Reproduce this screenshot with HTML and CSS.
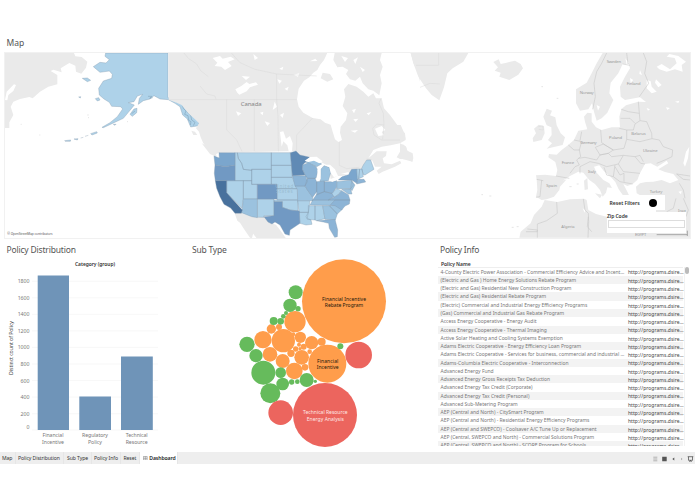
FILE: index.html
```html
<!DOCTYPE html>
<html lang="en">
<head>
<meta charset="utf-8">
<title>Dashboard</title>
<link rel="stylesheet" href="styles.css">
</head>
<body>
<main class="dashboard">
<section class="map-panel">
<h2>Map</h2>
<div class="map">
<svg class="map-art" viewBox="5 53 685 185">
<!-- Siberia, Alaska -->
<g transform="translate(0 35) scale(.33333)">
<path class="land" d="M15 54H222L226 64 245 66 262 80 258 98 244 116 228 110 226 92 208 84 182 100 185 112 160 104 152 108 172 120 172 148 145 155 120 170 98 190 88 186 60 192 40 200 32 215 40 240 28 262 28 279H15Z"/>
<path class="water" d="M15 195 20 170 42 148 48 150 40 168 25 180 22 196Z"/>
<path class="state s1" d="M317 54H504V188L518 190 530 202 546 198 560 205 572 225 585 247 597 255 597 272 572 276 562 252 548 240 540 215 525 205 505 194 480 192 462 182 450 192 430 197 415 208 418 190 428 178 412 183 402 200 385 203 403 210 385 232 370 250 340 264 310 278 306 277 330 263 352 245 368 222 362 215 335 214 328 202 312 192 298 180 296 160 310 138 335 130 337 118 328 108 300 112 280 95 300 82 318 84 328 74 315 64ZM390 238 402 222 411 220 410 233 397 244ZM247 130 262 129 272 136 262 140ZM286 191 296 188 300 195 292 198ZM272 296 290 290 292 294 276 300ZM194 317 212 315 211 319 196 319ZM222 312 234 311 232 315ZM236 186 242 185 241 189ZM340 268 348 268 345 271ZM255 304 265 301M242 309 250 307"/>
<path class="coast" d="M546 205 550 220 558 228 554 238 564 242 566 256 573 260 571 270M556 212 562 232 572 240 575 255 585 262 580 272M444 184 455 184 449 190 458 188M395 236 405 228"/>
<path class="speck" d="M118 300h3M262 240h4M264 248h3M381 260h3M62 268h3"/>
</g>
<!-- North America -->
<g transform="translate(200 50) scale(.33333)">
<path class="land" d="M-94 9H382L372 30 360 45 352 60 340 68 328 82 312 92 296 116 291 148 296 170 310 188 338 204 362 208 375 218 392 224 398 245 405 268 415 276 426 270 420 248 422 230 438 210 442 190 428 168 436 140 432 118 445 102 470 110 490 125 505 140 520 130 528 145 545 145 552 175 570 195 592 225 602 225 613 250 617 270 600 280 572 286 545 290 520 300 505 325 530 304 560 304 558 318 548 325 552 340 575 343 600 332 604 340 585 350 548 365 536 372 530 362 545 350 525 350 516 330 500 330 485 357 430 376 400 388 392 388 388 350 370 340 330 321 300 315 288 303 57 308 40 316 30 303 10 280 2 262 -3 245 -12 235 -3 220 -15 208 -35 190 -55 165 -70 158 -94 149ZM400 9H545L540 30 548 50 540 75 545 100 538 136 520 122 505 118 488 100 480 80 466 92 450 88 438 72 445 60 428 50 410 52 398 30ZM608 282 618 290 622 302 638 310 640 325 636 335 625 328 600 327 590 322 600 305ZM650 9H660V95L655 70 640 40 632 9ZM368 68 390 72 400 88 382 95 362 85ZM-26 242-15 245-8 255-20 255ZM5 280 25 290 50 315 48 320 30 312ZM104 490 124 490 155 500 172 503 192 500 215 520 228 524 240 540 258 565H170L155 545 140 520 128 503 130 500 146 526 160 548 156 564 150 563 134 540 120 518 112 512Z"/>
<path class="water" d="M38 24 60 18 68 26 92 20 104 28 84 36 95 48 75 60 64 50 44 48 52 38ZM106 118 124 108 140 96 148 102 168 97 174 104 150 112 140 124 118 134 112 128ZM125 78 150 80 138 90ZM232 88 246 92 238 101ZM254 116 266 110 262 122ZM160 12 174 24 164 30ZM238 56 250 50 247 60ZM280 74 298 70 294 80ZM218 180 224 155 231 170ZM240 195 252 188 248 204ZM240 246 250 244 258 266 270 258 278 280 276 304 266 304 262 286 250 274 245 290ZM180 188 190 185 188 196ZM108 184 124 190 114 198ZM194 214 210 219 202 228ZM330 34 346 26 352 33ZM460 208 475 206 467 216ZM452 242 474 240 465 248ZM525 236 545 228 556 240 545 246 552 256 535 258ZM424 18 444 24 435 36ZM460 30 474 22 466 42ZM480 50 495 60 488 66ZM456 180 468 176 462 190ZM500 190 514 186 506 196ZM382 9 404 9 400 30 412 52 400 70 380 66 368 52Z"/>
<path class="border" d="M-94 149H290M-48 9-35 25-10 42 2 62 25 80M0 108 20 132 45 138 48 148M94 9 120 38 165 58 230 72V148L234 200 235 304M230 72 350 78M80 148V240L110 270 126 304M163 148V304M338 204 290 255V304M418 276V346L440 356 478 352M543 145 537 160 550 190 552 225 530 222 518 235 522 255 545 270H610M552 225 548 268M500 327 516 330"/>
<path class="state s1" d="M105 308H112L115 325 125 340 130 358 155 360V392H105ZM112 308H214V358H155V362L130 358 125 340 115 325ZM155 358H214V403H155ZM214 308H271L275 346H214ZM214 346H275L277 382H214ZM214 382H277L285 400 292 416H231V403H214ZM231 416H292L293 450H231ZM222 450H293L294 483 270 480 247 472V455H222ZM80 392H130V447L126 475 80 428ZM130 392H155V403H172V447H130ZM172 447H222V497H192V502H172ZM293 452H330L325 487H297ZM297 487H325L322 505 333 510 336 523 318 525 300 520ZM325 467H345V510L322 508 318 500 325 487ZM345 467H368L375 506 350 512 345 510ZM393 430 400 425 410 416 425 422 415 434 402 442ZM485 355 490 345 500 330 512 330 522 358 495 375 490 374ZM470 357H479L476 386 470 390ZM479 357H486L490 380 476 386Z"/>
<path class="state s2" d="M130 447H172V503L155 500 124 488 127 475ZM368 467H388L412 492 406 510 375 508ZM330 465 338 450H410L390 466ZM410 395 455 390 460 405 452 416H410ZM362 375 362 358 372 347 388 352 392 368 385 392 360 395ZM315 336 328 332 345 330 365 342 350 350 325 340ZM388 467 405 465 427 478 412 492ZM285 408H315L338 442V452H293L292 418ZM455 392 465 405 456 422 452 416ZM425 418 452 417 456 432 445 432Z"/>
<path class="state s3" d="M277 377H318L322 395 315 408H285ZM308 345 325 338 348 350 354 362 348 385H322L315 375 307 358ZM322 385H345L350 395V425L338 442 322 420 315 408ZM350 395 373 393V425L350 435ZM373 395H395L410 392V412L397 430 373 425ZM338 450 350 433 373 425 395 430 402 440 385 450ZM385 450 402 442 415 434 425 422 445 434 450 450ZM405 450H450L448 462 435 468 425 480 405 467 390 466ZM350 512 405 508 413 540 412 560 404 562 388 535 386 520 370 516ZM472 388 492 388 497 396 470 402Z"/>
<path class="state s4" d="M42 318 58 324 57 308H105V346L75 350 45 345ZM415 390 425 380 445 374 455 358 470 357 472 390 470 400 455 390Z"/>
<path class="state s5" d="M45 345 75 350 105 346V392H46L43 370ZM172 403H231V447H172ZM222 455H247V472L270 480 298 483 300 520 270 540 268 556 255 552 240 525 225 516 216 522 204 516 192 500 222 497Z"/>
<path class="state s6" d="M271 308 288 303 300 315 330 322 308 345 307 358 315 375 277 377Z"/>
<path class="state s7" d="M46 392H80V428L127 480 124 490H105L92 474 72 463 60 440 50 415Z"/>
<path class="water" d="M314 332 330 321 350 320 368 334 358 340 342 332 325 336ZM354 392 352 360 360 347 370 344 362 358 362 388ZM372 344 390 344 405 358 414 378 402 382 392 368 388 352ZM390 388 414 378 428 378 414 388 396 396ZM422 372 446 366 446 373Z"/>
<text class="ghost" x="226" y="413">United</text><text class="ghost" x="228" y="428">States</text>
<text class="label big" x="122" y="169" textLength="63">Canada</text>
</g>
<!-- Europe and North Africa -->
<g transform="translate(400 50) scale(.33333)">
<path class="land" d="M32 9H205L190 35 158 55 142 70 132 112 118 151 95 135 78 115 55 80 42 45ZM280 36 296 28 302 42 320 38 345 32 362 42 369 55 355 74 328 90 298 80 302 68 284 62 294 52ZM0 235 15 250 17 268 0 276ZM0 280 18 290 22 302 38 318 38 335 18 330 0 325Z"/>
<path class="land" d="M608 9H870V445H795L780 440 750 445 725 438 710 430 708 410 720 400 738 396 760 395 785 390 810 400 835 390 820 372 795 366 775 358 805 340 800 332 772 350 752 340 735 342 720 370 712 390 698 402 682 408 670 402 682 425 690 442 672 440 656 418 646 396 632 380 612 364 598 346 582 350 590 368 610 390 628 400 636 414 622 412 618 428 608 440 600 420 585 402 568 390 550 368 535 365 510 378 488 392 500 388 480 410 478 420 462 440 440 448 425 450 408 440 412 420 410 388 408 376 435 374 468 378 472 360 466 336 445 322 447 312 470 314 485 300 505 285 522 270 535 242 562 238 555 215 552 200 562 188 575 190 575 215 588 232 605 240 635 232 660 232 658 200 664 178 678 166 715 155 738 156 720 142 675 150 662 140 660 110 675 80 690 55 686 42 668 42 655 70 632 98 628 130 640 150 622 188 605 205 590 212 582 185 576 160 565 178 540 182 528 160 528 118 560 98 575 70 590 40Z"/>
<path class="land" d="M430 200 440 176 456 182 450 196 466 202 470 226 482 250 495 262 488 285 465 290 440 296 456 280 444 270 455 255 454 232 440 226ZM402 236 416 224 432 228 434 250 425 270 400 276 398 265 408 250ZM552 392 562 384 564 418 554 420ZM585 430 606 434 600 445ZM434 450 472 456 510 448 552 446 560 450 565 480 588 492 620 500 660 495 700 490H870V563H358L362 545 392 520 402 495 425 470ZM768 440H870V500H768Z"/>
<path class="water" d="M770 50 785 42 810 58 830 40 824 24 800 20 808 12 835 18 858 35 845 45 848 65 825 58 800 65 778 58ZM740 90 752 94 755 110 770 125 755 130 740 115ZM768 88 785 105 775 112 765 98ZM690 84 700 90 692 98ZM720 60 726 75 718 72ZM676 25 686 38 680 44ZM740 174 750 178 744 182ZM798 172 810 174 802 180ZM825 155 838 152 835 159ZM835 425 845 423 843 433ZM850 340 858 305 868 290 864 325 855 350ZM590 165 600 170 594 182ZM548 475 556 480 554 488Z"/>
<path class="border dark" d="M620 9 605 40 590 65 582 100 586 140 578 178M668 42 690 46M680 9 684 42M730 9 740 35 734 70 746 100 718 140M664 178 685 185 718 190M715 155 718 190 720 212 705 222 700 240 680 240 658 235M662 205 690 205 705 220M720 212 740 215 755 250 756 266 720 275 680 268M680 240V268L672 295 640 300 615 285 605 278 602 240M756 266 778 270 790 290 818 300 816 320 795 330 770 340M522 270 545 275 538 300 542 320 530 330 538 345 525 350 510 370M545 245 540 272M505 285 522 300 538 300M586 292 610 282 640 300 625 310 600 315 586 292M535 325 555 322 590 330 600 315 625 310 635 320 670 316 655 342 620 350 595 340 570 335 540 350M670 316 705 320 722 340 735 342M655 342 670 365 720 370M705 320 720 316 730 335M612 352 620 375 640 380 645 345M645 350 660 375 672 370 672 395M640 380 660 395 698 402M425 390 420 440 408 442M410 388 430 392M468 378 508 385M540 350V370M470 456 472 490 440 512 412 522 412 545 378 545M550 447 555 480 565 490 566 515 564 563M382 537 412 540V563M870 378 830 372 850 388 870 390M838 400 850 420 855 445M828 445 820 475 800 485M850 445 865 480 858 500M565 500 562 530 575 545"/>
<path class="border" d="M116 9V45M48 46H116M60 112 90 100 120 102M415 230 428 228 430 240 416 238"/>
<path class="speck" d="M424 110h5M470 145h5M508 410h7M244 434h5M268 438h6M335 532h6M350 530h6M530 402h6"/>
<g class="label"><text x="620" y="38" textLength="43">Sweden</text><text x="680" y="105" textLength="42">Finland</text><text x="539" y="131" textLength="42">Norway</text><text x="694" y="255" textLength="43">Belarus</text><text x="627" y="268" textLength="39">Poland</text><text x="541" y="282" textLength="49">Germany</text><text x="729" y="307" textLength="44">Ukraine</text><text x="485" y="341" textLength="37">France</text><text x="564" y="370" textLength="24">Italy</text><text x="439" y="412" textLength="32">Spain</text><text x="749" y="429" textLength="38">Turkey</text><text x="484" y="534" textLength="40">Algeria</text><text x="834" y="486">Iraq</text><text x="705" y="558" textLength="34">EGYPT</text></g>
<path class="scale-mark" d="M770 554H862M862 542V558"/>
</g>
</svg>
<span class="credit">© OpenStreetMap contributors</span>
<div class="reset"><b>Reset Filters</b><i></i></div>
<div class="zip"><label for="zip">Zip Code</label><input id="zip" type="text"></div>
</div>
</section>
<div class="panels">
<section class="distribution">
<h2>Policy Distribution</h2>
<svg class="chart" viewBox="0 258 190 192">
<path class="grid" d="M32 281.2H158M32 297.8H158M32 314.3H158M32 330.9H158M32 347.4H158M32 364H158M32 380.6H158M32 397.1H158M32 413.7H158M32 430H158"/>
<path class="bars" d="M37.7 275.5H69V430H37.7ZM79.3 396.5H111V430H79.3ZM121 356.5H152.8V430H121Z"/>
<text class="chart-title" x="95" y="265.8" textLength="40">Category (group)</text>
<g class="ticks"><text x="29.5" y="283.1">1800</text><text x="29.5" y="299.7">1600</text><text x="29.5" y="316.2">1400</text><text x="29.5" y="332.8">1200</text><text x="29.5" y="349.4">1000</text><text x="29.5" y="365.9">800</text><text x="29.5" y="382.5">600</text><text x="29.5" y="399.1">400</text><text x="29.5" y="415.6">200</text><text x="29.5" y="428.7">0</text></g>
<g class="cats"><text x="53" y="437.3" textLength="21">Financial</text><text x="53" y="444.3" textLength="22">Incentive</text><text x="95" y="437.3" textLength="26">Regulatory</text><text x="95" y="444.3" textLength="14">Policy</text><text x="136.7" y="437.3" textLength="22">Technical</text><text x="136.7" y="444.3" textLength="22">Resource</text></g>
<text class="axis" transform="translate(13.3 375) rotate(-90)" textLength="54">Distinct count of Policy</text>
</svg>
</section>
<section class="subtype">
<h2>Sub Type</h2>
<svg class="bubbles" viewBox="190 258 248 192">
<g transform="translate(230 255.3) scale(.33333)">
<g class="orange"><circle cx="342" cy="138" r="126"/><circle cx="292" cy="325" r="57"/><circle cx="195" cy="199" r="32"/><circle cx="160" cy="256" r="35"/><circle cx="99" cy="253" r="26"/><circle cx="124" cy="221" r="14"/><circle cx="147" cy="215" r="9"/><circle cx="120" cy="297" r="22"/><circle cx="158" cy="317" r="21"/><circle cx="193" cy="347" r="25"/><circle cx="215" cy="306" r="22"/><circle cx="211" cy="246" r="17"/><circle cx="245" cy="262" r="20"/><circle cx="275" cy="259" r="12"/><circle cx="183" cy="294" r="11"/><circle cx="197" cy="281" r="8"/><circle cx="207" cy="268" r="6"/><circle cx="221" cy="274" r="9"/><circle cx="225" cy="336" r="10"/><circle cx="239" cy="289" r="7"/><circle cx="190" cy="237" r="6"/><circle cx="210" cy="280" r="5"/></g>
<g class="green"><circle cx="197" cy="111" r="21"/><circle cx="180" cy="150" r="20"/><circle cx="204" cy="160" r="8"/><circle cx="168" cy="173" r="6"/><circle cx="160" cy="183" r="7"/><circle cx="152" cy="198" r="10"/><circle cx="131" cy="197" r="12"/><circle cx="51" cy="267" r="23"/><circle cx="78" cy="301" r="20"/><circle cx="100" cy="352" r="36"/><circle cx="152" cy="352" r="16"/><circle cx="158" cy="386" r="19"/><circle cx="121" cy="414" r="30"/><circle cx="185" cy="380" r="8"/><circle cx="202" cy="379" r="7"/><circle cx="230" cy="374" r="21"/><circle cx="256" cy="378" r="5"/><circle cx="331" cy="273" r="9"/></g>
<g class="red"><circle cx="386" cy="299" r="40"/><circle cx="152" cy="472" r="37"/><circle cx="285" cy="479" r="96"/></g>
<g class="bubble-text"><text x="342" y="136" textLength="132">Financial Incentive</text><text x="342" y="156" textLength="115">Rebate Program</text><text x="293" y="322" textLength="64">Financial</text><text x="293" y="342" textLength="66">Incentive</text><g class="pale"><text x="286" y="475" textLength="134">Technical Resource</text><text x="286" y="496" textLength="112">Energy Analysis</text></g></g>
</g>
</svg>
</section>
<section class="info">
<h2>Policy Info</h2>
<h3>Policy Name</h3>
<div class="table-wrap">
<ul class="table">
<li><span>4-County Electric Power Association - Commercial Efficiency Advice and Incent...</span><a>http://programs.dsire...</a></li>
<li><span>(Electric and Gas ) Home Energy Solutions Rebate Program</span><a>http://programs.dsire...</a></li>
<li><span>(Electric and Gas) Residential New Construction Program</span><a>http://programs.dsire...</a></li>
<li><span>(Electric and Gas) Residential Rebate Program</span><a>http://programs.dsire...</a></li>
<li><span>(Electric) Commercial and Industrial Energy Efficiency Programs</span><a>http://programs.dsire...</a></li>
<li><span>(Gas) Commercial and Industrial Gas Rebate Program</span><a>http://programs.dsire...</a></li>
<li><span>Access Energy Cooperative - Energy Audit</span><a>http://programs.dsire...</a></li>
<li><span>Access Energy Cooperative - Thermal Imaging</span><a>http://programs.dsire...</a></li>
<li><span>Active Solar Heating and Cooling Systems Exemption</span><a>http://programs.dsire...</a></li>
<li><span>Adams Electric Cooperative - Energy Efficiency Loan Program</span><a>http://programs.dsire...</a></li>
<li><span>Adams Electric Cooperative - Services for business, commercial and industrial ...</span><a>http://programs.dsire...</a></li>
<li><span>Adams-Columbia Electric Cooperative - Interconnection</span><a>http://programs.dsire...</a></li>
<li><span>Advanced Energy Fund</span><a>http://programs.dsire...</a></li>
<li><span>Advanced Energy Gross Receipts Tax Deduction</span><a>http://programs.dsire...</a></li>
<li><span>Advanced Energy Tax Credit (Corporate)</span><a>http://programs.dsire...</a></li>
<li><span>Advanced Energy Tax Credit (Personal)</span><a>http://programs.dsire...</a></li>
<li><span>Advanced Sub-Metering Program</span><a>http://programs.dsire...</a></li>
<li><span>AEP (Central and North) - CitySmart Program</span><a>http://programs.dsire...</a></li>
<li><span>AEP (Central and North) - Residential Energy Efficiency Programs</span><a>http://programs.dsire...</a></li>
<li><span>AEP (Central and SWEPCO) - Coolsaver A/C Tune Up or Replacement</span><a>http://programs.dsire...</a></li>
<li><span>AEP (Central, SWEPCO and North) - Commercial Solutions Program</span><a>http://programs.dsire...</a></li>
<li><span>AEP (Central, SWEPCO and North) - SCORE Program for Schools</span><a>http://programs.dsire...</a></li>
</ul>
<div class="scroll"><i></i></div>
</div>
</section>
</div>
</main>
<nav class="tabs">
<span class="t1">Map</span><span class="t2">Policy Distribution</span><span class="t3">Sub Type</span><span class="t4">Policy Info</span><span class="t5">Reset</span>
<span class="active"><svg viewBox="0 0 5 5"><path d="M.4.4H4.6V4.6H.4ZM2.5.4V4.6M.4 2.5H4.6"/></svg>Dashboard</span>
<svg class="tools" viewBox="0 0 48 12"><path class="list" d="M6.3 5.2H10.3M6.3 7H10.3M6.3 8.8H10.3"/><path class="fill" d="M15.2 4.7H19.7V9.3H15.2ZM27.3 5.4V8.6L25.3 7Z"/><path class="dim" d="M34 5.7V8.3L35.5 7Z"/><path class="present" d="M40.7 4.7H46.3M41.5 4.8V8.3H45.5V4.8M43.5 8.3V9.3M42.3 9.9 43.5 8.7 44.7 9.9"/></svg>
</nav>
</body>
</html>
```
FILE: styles.css
```css
* { box-sizing: border-box; }
body { margin: 0; width: 695px; height: 494px; overflow: hidden; background: #fff; font-family: "Noto Sans", "Open Sans", sans-serif; color: #666; }
h2, h3, ul { margin: 0; padding: 0; }
h2 { font-size: 8.5px; line-height: 12px; font-weight: 400; color: #555; }
text { font-family: "Noto Sans", sans-serif; }
.dashboard { height: 451.5px; padding-top: 37px; overflow: hidden; }
.map-panel h2 { height: 16px; padding-left: 6.5px; }
.map { position: relative; width: 685px; height: 185px; margin-left: 5px; outline: 1px solid #f1f1f1; outline-offset: -.5px; overflow: hidden; }
.map-art { display: block; width: 685px; height: 185px; }
.land { fill: #eaeaea; }
.water { fill: #fff; }
.border { fill: none; stroke: #d8d8d8; stroke-width: 1.4; }
.border.dark { stroke: #c6c6c6; stroke-width: 1.7; }
.speck { stroke: #e5e5e5; stroke-width: 3; }
.scale-mark { fill: none; stroke: #999; stroke-width: 2.5; }
.state { stroke: #8199ac; stroke-width: 1.1; stroke-linejoin: round; }
.coast { fill: none; stroke: #7899b0; stroke-width: 1.5; }
.s1 { fill: #aed2e9; }
.s2 { fill: #9bc2df; }
.s3 { fill: #8cb4d6; }
.s4 { fill: #7ba6cd; }
.s5 { fill: #7199c3; }
.s6 { fill: #608ab5; }
.s7 { fill: #48719d; }
.label { fill: #999; font-size: 12.5px; }
.label.big { font-size: 18px; fill: #858585; }
.ghost { fill: #9bbdd2; font-size: 14px; letter-spacing: 2px; }
.credit { position: absolute; left: 2.3px; bottom: 1px; font-size: 3.2px; line-height: 5px; color: #555; letter-spacing: -.05px; }
.reset { position: absolute; left: 600px; top: 142px; width: 60px; height: 15px; background: #fff; display: flex; align-items: center; justify-content: space-between; padding: 0 8.5px 0 4.5px; font-size: 5.1px; color: #333; letter-spacing: -.03px; }
.reset i { width: 8px; height: 8px; border-radius: 50%; background: #000; }
.reset b, .zip label { font-weight: 600; }
.zip { position: absolute; left: 602px; top: 158.7px; width: 79px; height: 21.5px; background: #fff; font-size: 5px; line-height: 8px; color: #333; letter-spacing: -.06px; }
.zip label { display: block; }
.zip input { display: block; width: 77px; height: 8px; margin: .5px 0 0 1px; padding: 0; border: 1px solid #ddd; background: #fff; }
.panels { display: grid; grid-template-columns: 190px 248px 257px; padding-top: 5.7px; }
.panels h2 { height: 14px; letter-spacing: -.18px; }
.distribution h2 { padding-left: 6.5px; }
.subtype h2 { padding-left: 2px; }
.info h2 { padding-left: 2px; }
.panels .info h2, .panels .subtype h2 { letter-spacing: -.22px; }
.chart, .bubbles { display: block; height: 192px; }
.chart { width: 190px; }
.bubbles { width: 248px; }
.grid { stroke: #f1f1f1; stroke-width: .6; }
.bars { fill: #6f94b8; }
.chart text { font-size: 5.2px; fill: #777; }
.chart-title, .cats text, .bubble-text { text-anchor: middle; }
.chart .chart-title { fill: #333; font-weight: 600; font-size: 4.9px; }
.ticks { text-anchor: end; }
.chart .axis { fill: #444; text-anchor: start; }
.orange { fill: #ff9d4b; }
.green { fill: #66bb5c; }
.red { fill: #ec655e; }
.bubble-text { font-size: 15px; fill: #20150b; }
.pale { fill: #ffe9e7; }
.info h3 { height: 9px; padding-left: 3px; font-size: 5px; line-height: 12px; font-weight: 600; color: #333; letter-spacing: -.06px; }
.table-wrap { display: flex; gap: 1.2px; height: 179px; overflow: hidden; }
.table { width: 245px; list-style: none; font-size: 4.95px; line-height: 8.27px; border-top: .5px solid #eee; }
.table li { display: grid; grid-template-columns: 190px 55px; height: 8.27px; white-space: nowrap; }
.table li:nth-child(even) { background: #f3f3f3; }
.table span { padding-left: 2.5px; color: #777; }
.table a { position: relative; top: .8px; color: #444; letter-spacing: .07px; }
.scroll { width: 5px; border-left: 1px solid #f2f2f2; }
.scroll i { display: block; width: 3.5px; height: 7px; margin-top: .5px; border-radius: 2px; background: #bbb; }
.tabs { display: flex; height: 12.5px; background: #eee; font-size: 5.1px; line-height: 12px; color: #333; white-space: nowrap; letter-spacing: -.09px; }
.tabs > span { border-right: 1px solid #e6e6e6; flex: none; }
.t1 { width: 16px; padding-left: 2px; }
.t2 { width: 48px; padding-left: 2px; }
.t3 { width: 27.5px; padding-left: 3px; }
.t4 { width: 29.5px; padding-left: 2.5px; }
.t5 { width: 19px; padding-left: 2.5px; }
.active { width: 38px; padding-left: 3px; background: #fff; font-weight: 600; color: #222; display: flex; align-items: center; gap: 1.8px; }
.active svg { width: 4.5px; height: 4.5px; fill: none; stroke: #777; stroke-width: .6; }
.tools { width: 48px; height: 12px; margin-left: auto; }
.tools path { fill: none; stroke: #888; stroke-width: .6; }
.tools .fill { fill: #555; stroke: none; }
.tools .dim { fill: #aaa; stroke: none; }
.tools .present { stroke: #444; stroke-width: .7; }
```
